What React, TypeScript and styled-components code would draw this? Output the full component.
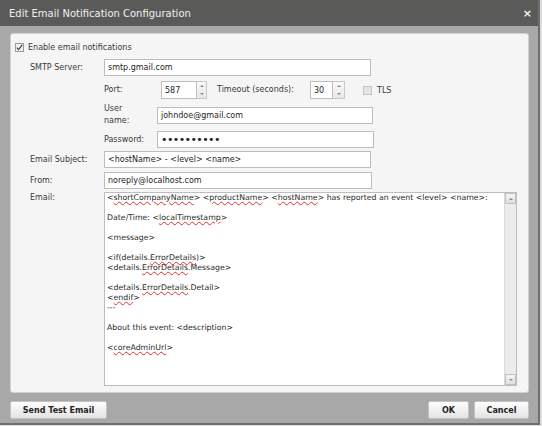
import styled, { createGlobalStyle } from "styled-components";

const GlobalStyle = createGlobalStyle`
  html, body {
    margin: 0;
    padding: 0;
    background: #dcdcdc;
  }
  body {
    font-family: "DejaVu Sans", Tahoma, sans-serif;
  }
`;

export default function App() {
  return (
    <>
      <GlobalStyle/>
      <Dialog>
        <TitleBar>
          <span>Edit Email Notification Configuration</span>
          <Close>×</Close>
        </TitleBar>

        <Body>
          <Panel>
            <CheckRow>
              <CheckBox $checked>
                <svg width="7" height="7" viewBox="0 0 7 7">
                  <path d="M0.8 3.6 L2.6 5.6 L6.2 0.8" fill="none" stroke="#444" strokeWidth="1.2"/>
                </svg>
              </CheckBox>
              <span>Enable email notifications</span>
            </CheckRow>

            <Form>
              <Row $top={6}>
                <Label>SMTP Server:</Label>
                <Input $w={267} defaultValue="smtp.gmail.com" readOnly/>
              </Row>

              <Row $top={5}>
                <Spacer/>
                <SubLabel $w={57}>Port:</SubLabel>
                <Input $w={36} $h={18} defaultValue="587" readOnly/>
                <Spinner $h={18}>
                  <Arrow $up/>
                  <Arrow/>
                </Spinner>
                <SubLabel $w={93} $left={10}>Timeout (seconds):</SubLabel>
                <Input $w={23} $h={18} defaultValue="30" readOnly/>
                <Spinner $h={18} $w={12}>
                  <Arrow $up/>
                  <Arrow/>
                </Spinner>
                <CheckBox $left={18}/>
                <Tls>TLS</Tls>
              </Row>

              <Row $top={4}>
                <Spacer/>
                <SubLabel $w={53}>User<br/>name:</SubLabel>
                <Input $w={216} defaultValue="johndoe@gmail.com" readOnly/>
              </Row>

              <Row $top={4}>
                <Spacer/>
                <SubLabel $w={53}>Password:</SubLabel>
                <Input $w={217} type="password" $dots defaultValue="abcdefghij" readOnly/>
              </Row>

              <Row $top={3}>
                <Label>Email Subject:</Label>
                <Input $w={267} defaultValue="<hostName> - <level> <name>" readOnly/>
              </Row>

              <Row $top={4}>
                <Label>From:</Label>
                <Input $w={268} defaultValue="noreply@localhost.com" readOnly/>
              </Row>

              <Row $top={3} $align="flex-start">
                <Label $pad={1}>Email:</Label>
                <EmailBox>
                  <EmailText>
                    <Line>&lt;<Typo>shortCompanyName</Typo>&gt; &lt;<Typo>productName</Typo>&gt; &lt;<Typo>hostName</Typo>&gt; has reported an event &lt;level&gt; &lt;name&gt;:</Line>
                    <Line/>
                    <Line>Date/Time: &lt;<Typo>localTimestamp</Typo>&gt;</Line>
                    <Line/>
                    <Line>&lt;message&gt;</Line>
                    <Line/>
                    <Line>&lt;if(details.<Typo>ErrorDetails</Typo>)&gt;</Line>
                    <Line>&lt;details.<Typo>ErrorDetails</Typo>.Message&gt;</Line>
                    <Line/>
                    <Line>&lt;details.<Typo>ErrorDetails</Typo>.Detail&gt;</Line>
                    <Line>&lt;<Typo>endif</Typo>&gt;</Line>
                    <Line>---</Line>
                    <Line/>
                    <Line>About this event: &lt;description&gt;</Line>
                    <Line/>
                    <Line>&lt;<Typo>coreAdminUrl</Typo>&gt;</Line>
                  </EmailText>
                  <ScrollBar>
                    <ScrollButton><Arrow $up/></ScrollButton>
                    <ScrollButton><Arrow/></ScrollButton>
                  </ScrollBar>
                </EmailBox>
              </Row>
            </Form>
          </Panel>

          <Footer>
            <Button $w={97}>Send Test Email</Button>
            <ButtonGroup>
              <Button $w={41}>OK</Button>
              <Button $w={55}>Cancel</Button>
            </ButtonGroup>
          </Footer>
        </Body>
      </Dialog>
    </>
  );
}

const Dialog = styled.div`
  width: 540px;
  height: 425px;
  box-sizing: border-box;
  background: #a8a8a8;
  border-right: 2px solid #6e6e6e;
  border-bottom: 2px solid #6e6e6e;
  display: flex;
  flex-direction: column;
`
const TitleBar = styled.div`
  height: 26px;
  flex-shrink: 0;
  background: #5a5b59;
  color: #f0f0f0;
  font-size: 10px;
  display: flex;
  align-items: center;
  justify-content: space-between;
  padding: 0 6px 0 9px;
`
const Close = styled.span`
  font-size: 11px;
  font-weight: bold;
  color: #f4f4f4;
`
const Body = styled.div`
  padding: 7px 9px 0 10px;
`
const Panel = styled.div`
  width: 519px;
  height: 360px;
  box-sizing: border-box;
  background: #f5f5f5;
  border: 1px solid #d2d2d2;
  border-radius: 3px;
  padding: 7px 0 0 4px;
  font-size: 8px;
  color: #3a3a3a;
`
const CheckRow = styled.div`
  display: flex;
  align-items: center;
  gap: 4px;
  height: 12px;
`
const CheckBox = styled.span<{ $checked?: boolean; $left?: number }>`
  width: 9px;
  height: 9px;
  box-sizing: border-box;
  margin-left: ${p => p.$left ?? 0}px;
  border: 1px solid ${p => p.$checked ? "#9a9a9a" : "#c4c4c4"};
  background: ${p => p.$checked ? "#efefef" : "#e4e4e4"};
  display: flex;
  align-items: center;
  justify-content: center;
  flex-shrink: 0;
`
const Tls = styled.span`
  margin-left: 5px;
`
const Form = styled.div`
  margin-left: 15px;
  display: flex;
  flex-direction: column;
`
const Row = styled.div<{ $top: number; $align?: string }>`
  display: flex;
  align-items: ${p => p.$align ?? "center"};
  margin-top: ${p => p.$top}px;
`
const Label = styled.div<{ $pad?: number }>`
  width: 74px;
  flex-shrink: 0;
  padding-top: ${p => p.$pad ?? 0}px;
  line-height: 10px;
`
const Spacer = styled.div`
  width: 74px;
  flex-shrink: 0;
`
const SubLabel = styled.div<{ $w: number; $left?: number }>`
  width: ${p => p.$w}px;
  margin-left: ${p => p.$left ?? 0}px;
  flex-shrink: 0;
  line-height: 12px;
`
const Input = styled.input<{ $w: number; $h?: number; $dots?: boolean }>`
  width: ${p => p.$w}px;
  height: ${p => p.$h ?? 17}px;
  box-sizing: border-box;
  border: 1px solid #bdbdbd;
  background: #fff;
  padding: 0 3px;
  margin: 0;
  font-family: "DejaVu Sans", Tahoma, sans-serif;
  font-size: ${p => p.$dots ? 11 : 8}px;
  letter-spacing: ${p => p.$dots ? "-0.6px" : "0"};
  color: #1e1e1e;
  outline: none;
`
const Spinner = styled.div<{ $h: number; $w?: number }>`
  width: ${p => p.$w ?? 10}px;
  height: ${p => p.$h}px;
  box-sizing: border-box;
  border: 1px solid #c8c8c8;
  border-left: none;
  background: linear-gradient(#f8f8f8, #e8e8e8);
  display: flex;
  flex-direction: column;
  align-items: center;
  justify-content: space-around;
`
const Arrow = styled.span<{ $up?: boolean }>`
  width: 0;
  height: 0;
  border-left: 2px solid transparent;
  border-right: 2px solid transparent;
  ${p => p.$up ? "border-bottom: 2px solid #888;" : "border-top: 2px solid #888;"}
`
const EmailBox = styled.div`
  width: 413px;
  height: 194px;
  box-sizing: border-box;
  border: 1px solid #bdbdbd;
  background: #fff;
  display: flex;
`
const EmailText = styled.div`
  flex: 1;
  padding: 0 2px;
  overflow: hidden;
  color: #2a2a2a;
  font-size: 7.8px;
`
const Line = styled.div`
  height: 10px;
  line-height: 10px;
  white-space: pre;
`
const Typo = styled.span`
  text-decoration: underline wavy #e03030;
  text-decoration-thickness: 1px;
  text-underline-offset: 1px;
`
const ScrollBar = styled.div`
  width: 11px;
  flex-shrink: 0;
  background: #ececec;
  border-left: 1px solid #dadada;
  display: flex;
  flex-direction: column;
  justify-content: space-between;
`
const ScrollButton = styled.div`
  height: 11px;
  box-sizing: border-box;
  border: 1px solid #c2c2c2;
  background: linear-gradient(#f6f6f6, #dedede);
  display: flex;
  align-items: center;
  justify-content: center;
`
const Footer = styled.div`
  display: flex;
  justify-content: space-between;
  margin-top: 8px;
  width: 519px;
`
const ButtonGroup = styled.div`
  display: flex;
  gap: 5px;
`
const Button = styled.button<{ $w: number }>`
  width: ${p => p.$w}px;
  height: 18px;
  box-sizing: border-box;
  padding: 0;
  border: 1px solid #c2c2c2;
  border-radius: 2px;
  background: linear-gradient(#fefefe, #e3e3e3);
  font-family: "DejaVu Sans", Tahoma, sans-serif;
  font-size: 8px;
  font-weight: bold;
  color: #222;
`
